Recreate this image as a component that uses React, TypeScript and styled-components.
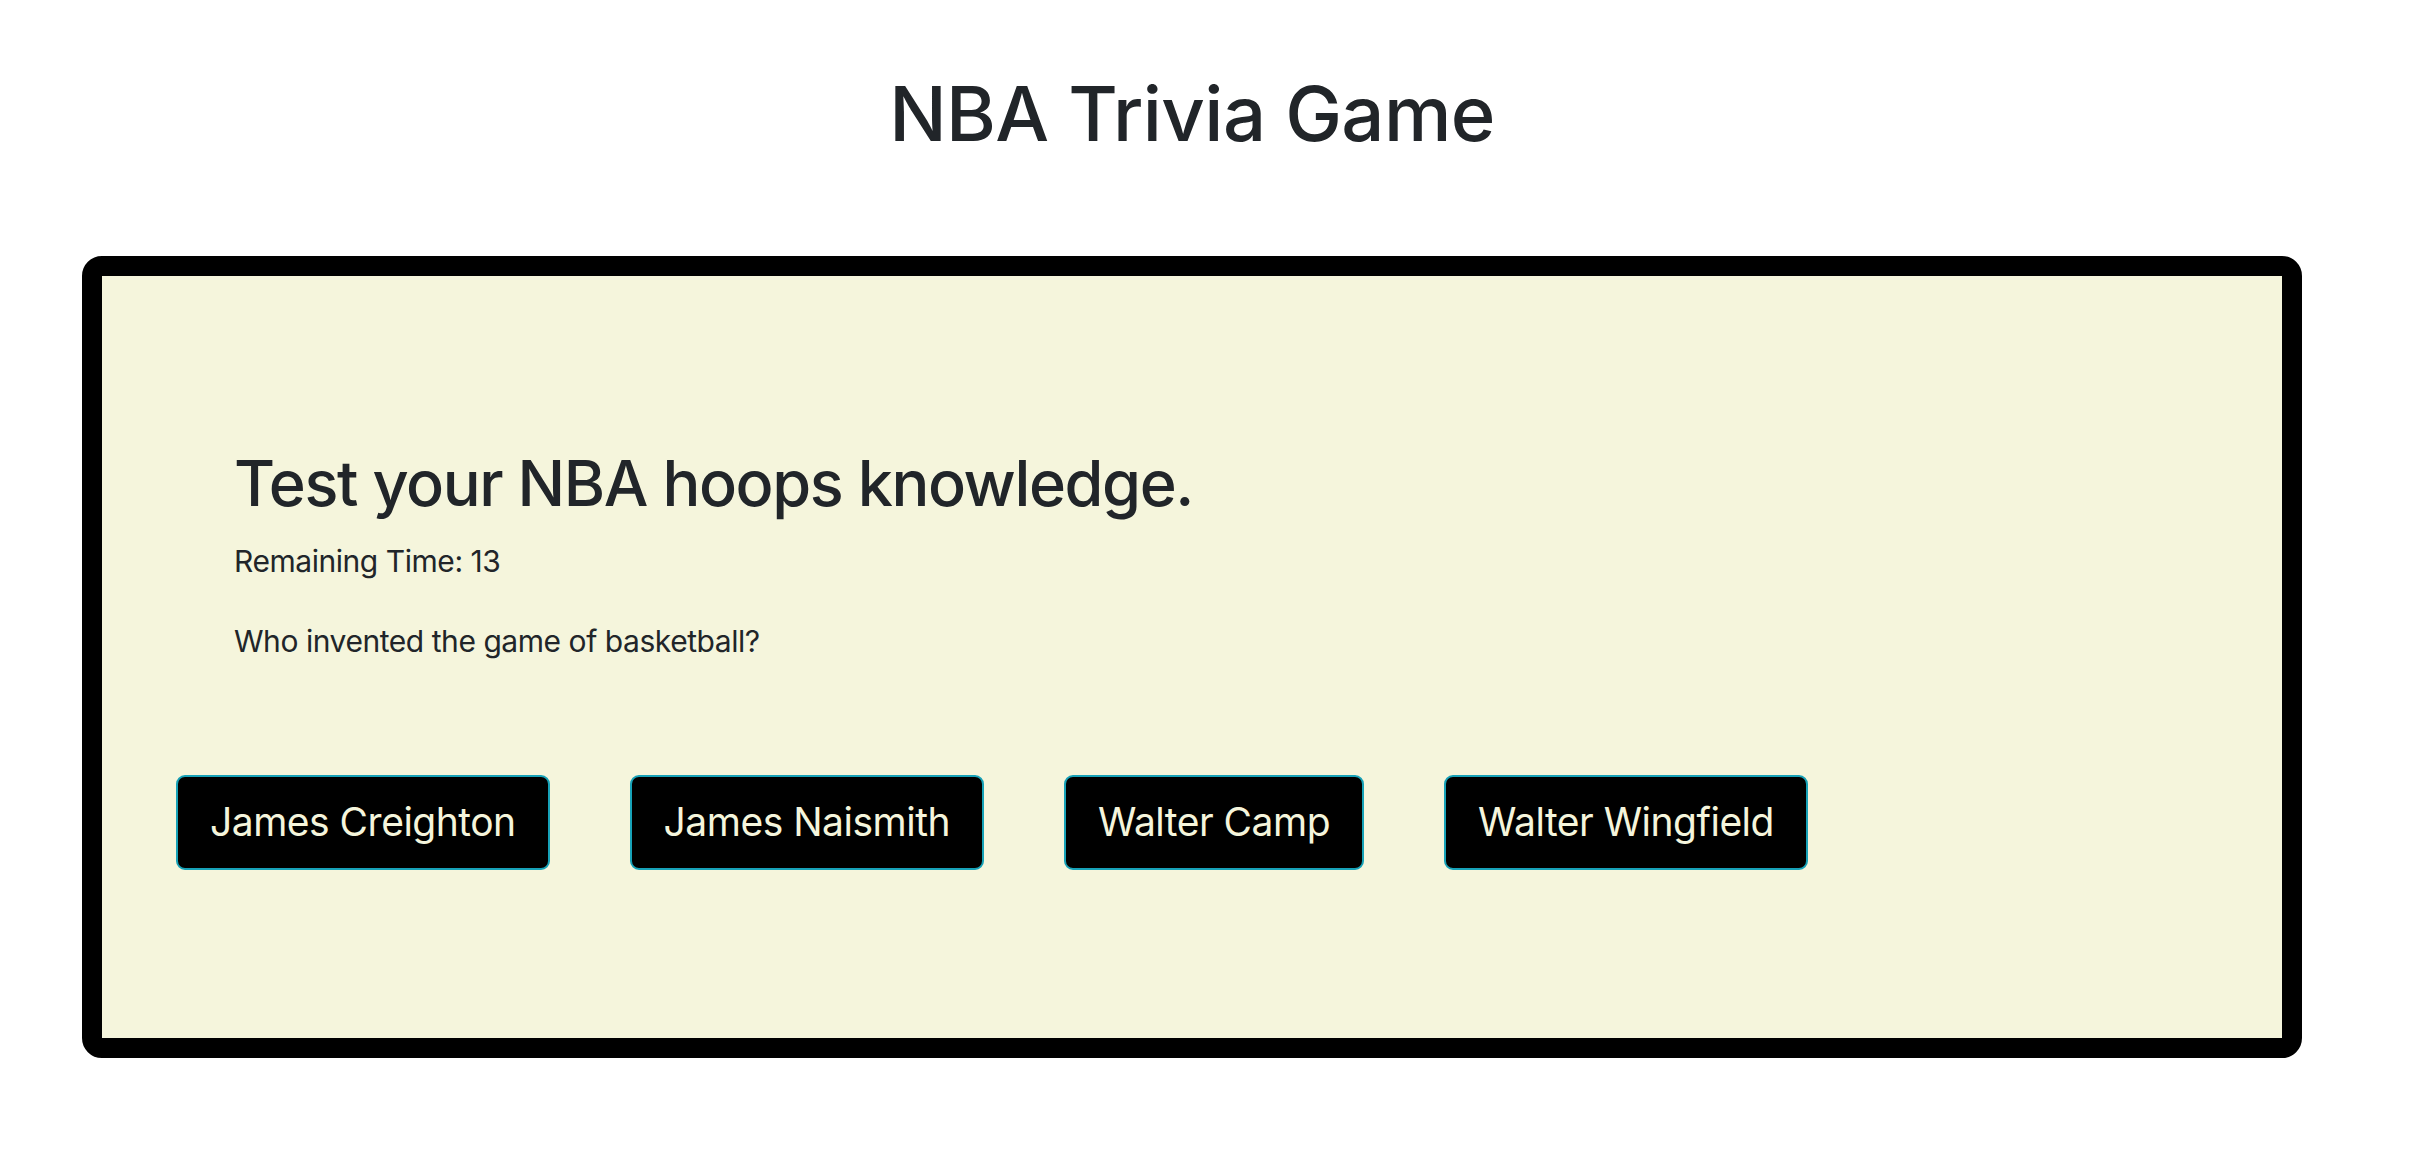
import React from "react";
import styled, { createGlobalStyle } from "styled-components";

const GlobalStyle = createGlobalStyle`
  html, body {
    margin: 0;
    padding: 0;
    background: #ffffff;
  }
  body {
    font-family: Inter, "Noto Sans", "Liberation Sans", sans-serif;
    color: #212529;
  }
`;

const Page = styled.div`
  margin: 0 110px 0 82px;
  padding-top: 68px;
`;

const Title = styled.h1`
  margin: 0 0 97px;
  text-align: center;
  font-size: 76px;
  font-weight: 500;
  letter-spacing: -0.6px;
  line-height: 91px;
  color: #212529;
`;

const Board = styled.section`
  background: #f5f5dc;
  border: 20px solid #000000;
  border-radius: 20px;
  padding: 169px 0 168px;
`;

const Intro = styled.div`
  padding-left: 132px;
`;

const Heading = styled.h2`
  margin: 0 0 16px;
  font-size: 63px;
  font-weight: 500;
  letter-spacing: -1.4px;
  line-height: 77px;
  color: #212529;
`;

const Text = styled.p<{ $gap: number }>`
  margin: 0 0 ${(p) => p.$gap}px;
  font-size: 30px;
  letter-spacing: -0.45px;
  line-height: 46px;
  color: #212529;
`;

const Answers = styled.div`
  display: flex;
  gap: 80px;
  padding-left: 74px;
`;

const AnswerButton = styled.button`
  font-family: Inter, "Noto Sans", "Liberation Sans", sans-serif;
  font-size: 39px;
  letter-spacing: -0.5px;
  line-height: 60px;
  padding: 15px 32px 16px;
  background: #000000;
  color: #f5f5dc;
  border: 2px solid #17a2b8;
  border-radius: 9px;
  cursor: pointer;
`;

const answers = ["James Creighton", "James Naismith", "Walter Camp", "Walter Wingfield"];

export default function App() {
  return (
    <>
      <GlobalStyle />
      <Page>
        <Title>NBA Trivia Game</Title>
        <Board>
          <Intro>
            <Heading>Test your NBA hoops knowledge.</Heading>
            <Text $gap={34}>Remaining Time: 13</Text>
            <Text $gap={111}>Who invented the game of basketball?</Text>
          </Intro>
          <Answers>
            {answers.map((a) => (
              <AnswerButton key={a}>{a}</AnswerButton>
            ))}
          </Answers>
        </Board>
      </Page>
    </>
  );
}
